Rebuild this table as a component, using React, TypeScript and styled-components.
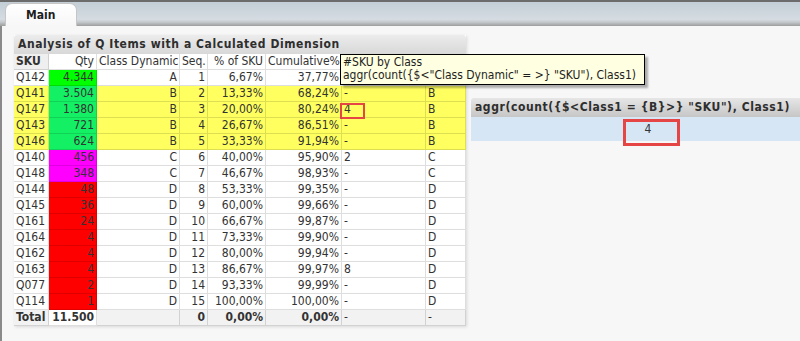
import * as React from "react";
import styled, { createGlobalStyle } from "styled-components";

const GlobalStyle = createGlobalStyle`
  html, body {
    margin: 0;
    padding: 0;
    background: #f7f7f7;
    overflow: hidden;
  }
  body {
    font-family: "DejaVu Sans Condensed", "DejaVu Sans", "Liberation Sans", sans-serif;
    font-stretch: condensed;
    font-size: 12px;
    color: #333333;
  }
`;

const Screen = styled.div`
  width: 800px;
  height: 341px;
  display: flex;
  flex-direction: column;
  overflow: hidden;
  background: #f7f7f7;
`;

const TabStrip = styled.div`
  height: 26px;
  box-sizing: border-box;
  border-top: 2px solid #6c6c6c;
  background: linear-gradient(#c3ced6 0%, #d5dce2 72%, #c4c9cd 84%, #9c9c9c 100%);
  display: flex;
  align-items: flex-end;
  padding-left: 5px;
`;

const Tab = styled.div`
  width: 72px;
  height: 23px;
  box-sizing: border-box;
  padding-left: 20px;
  line-height: 22px;
  font-weight: bold;
  color: #1e1e1e;
  background: linear-gradient(#ffffff, #f7f7f7);
  border: 1px solid #c6c6c6;
  border-bottom: none;
  border-radius: 7px 7px 0 0;
`;

const Sheet = styled.div`
  flex: 1;
  position: relative;
  display: flex;
  align-items: flex-start;
  gap: 5px;
  padding: 9px 0 0 12px;
  border-left: 2px solid #8a8a8a;
`;

const TableBox = styled.div`
  width: 452px;
  flex: none;
  display: flex;
  flex-direction: column;
  background: #ffffff;
  box-shadow: 1px 1px 3px rgba(0, 0, 0, 0.12);
`;

const Caption = styled.div<{ $dark?: boolean }>`
  height: 19px;
  line-height: 19px;
  padding-left: 4px;
  font-weight: bold;
  letter-spacing: 0.58px;
  white-space: pre;
  color: #2e2e2e;
  border-radius: 3px 3px 0 0;
  background: ${(p) =>
    p.$dark
      ? "linear-gradient(#e6e6e6, #c6c6c6)"
      : "linear-gradient(#ececec, #d8d8d8)"};
`;

const Row = styled.div<{ $bg: string }>`
  display: grid;
  grid-template-columns: 35px 48px 83px 28px 58px 76px 84px 40px;
  background: ${(p) => p.$bg};
`;

const Cell = styled.div<{ $align?: "left" | "right"; $fill?: string; $bold?: boolean }>`
  position: relative;
  height: 16px;
  box-sizing: border-box;
  padding: 0 2px;
  line-height: 15px;
  white-space: nowrap;
  text-align: ${(p) => p.$align ?? "right"};
  font-weight: ${(p) => (p.$bold ? "bold" : "normal")};
  background: ${(p) => p.$fill ?? "transparent"};
  border-right: 1px solid rgba(0, 0, 0, 0.13);
  border-bottom: 1px solid rgba(0, 0, 0, 0.13);
`;

const Marker = styled.span<{ $thick: number }>`
  position: absolute;
  box-sizing: border-box;
  border: ${(p) => p.$thick}px solid #e54545;
  pointer-events: none;
`;

const Tooltip = styled.div`
  position: absolute;
  left: 338px;
  top: 28px;
  width: 305px;
  box-sizing: border-box;
  padding: 1px 2px 2px 2px;
  line-height: 13px;
  white-space: pre;
  color: #1e1e1e;
  background: #ffffe1;
  border: 1px solid #000000;
  box-shadow: 3px 3px 2px rgba(0, 0, 0, 0.3);
  z-index: 2;
`;

const ExprBox = styled.div`
  margin-top: 63px;
  width: 354px;
  flex: none;
  display: flex;
  flex-direction: column;
`;

const ExprValue = styled.div`
  position: relative;
  height: 24px;
  line-height: 24px;
  text-align: center;
  color: #333333;
  background: #d6e6f5;
`;

type Band = "a" | "b" | "c" | "d";

const qtyFill: Record<Band, string> = {
  a: "#00ff00",
  b: "#14f064",
  c: "#ff00ff",
  d: "#ff0000",
};

const rowFill: Record<Band, string> = {
  a: "#ffffff",
  b: "#ffff5f",
  c: "#ffffff",
  d: "#ffffff",
};

// count/class1 of the first row sit under the hover tip, so they stay blank
const rows: {
  sku: string;
  qty: string;
  cls: string;
  seq: number;
  pct: string;
  cum: string;
  count: string;
  class1: string;
  band: Band;
  marked?: boolean;
}[] = [
  { sku: "Q142", qty: "4.344", cls: "A", seq: 1, pct: "6,67%", cum: "37,77%", count: "", class1: "", band: "a" },
  { sku: "Q141", qty: "3.504", cls: "B", seq: 2, pct: "13,33%", cum: "68,24%", count: "-", class1: "B", band: "b" },
  { sku: "Q147", qty: "1.380", cls: "B", seq: 3, pct: "20,00%", cum: "80,24%", count: "4", class1: "B", band: "b", marked: true },
  { sku: "Q143", qty: "721", cls: "B", seq: 4, pct: "26,67%", cum: "86,51%", count: "-", class1: "B", band: "b" },
  { sku: "Q146", qty: "624", cls: "B", seq: 5, pct: "33,33%", cum: "91,94%", count: "-", class1: "B", band: "b" },
  { sku: "Q140", qty: "456", cls: "C", seq: 6, pct: "40,00%", cum: "95,90%", count: "2", class1: "C", band: "c" },
  { sku: "Q148", qty: "348", cls: "C", seq: 7, pct: "46,67%", cum: "98,93%", count: "-", class1: "C", band: "c" },
  { sku: "Q144", qty: "48", cls: "D", seq: 8, pct: "53,33%", cum: "99,35%", count: "-", class1: "D", band: "d" },
  { sku: "Q145", qty: "36", cls: "D", seq: 9, pct: "60,00%", cum: "99,66%", count: "-", class1: "D", band: "d" },
  { sku: "Q161", qty: "24", cls: "D", seq: 10, pct: "66,67%", cum: "99,87%", count: "-", class1: "D", band: "d" },
  { sku: "Q164", qty: "4", cls: "D", seq: 11, pct: "73,33%", cum: "99,90%", count: "-", class1: "D", band: "d" },
  { sku: "Q162", qty: "4", cls: "D", seq: 12, pct: "80,00%", cum: "99,94%", count: "-", class1: "D", band: "d" },
  { sku: "Q163", qty: "4", cls: "D", seq: 13, pct: "86,67%", cum: "99,97%", count: "8", class1: "D", band: "d" },
  { sku: "Q077", qty: "2", cls: "D", seq: 14, pct: "93,33%", cum: "99,99%", count: "-", class1: "D", band: "d" },
  { sku: "Q114", qty: "1", cls: "D", seq: 15, pct: "100,00%", cum: "100,00%", count: "-", class1: "D", band: "d" },
];

export default function App() {
  return (
    <Screen>
      <GlobalStyle />
      <TabStrip>
        <Tab>Main</Tab>
      </TabStrip>
      <Sheet>
        <TableBox>
          <Caption>Analysis of Q Items with a Calculated Dimension</Caption>
          <Row $bg="#ffffff">
            <Cell $align="left" $bold $fill="#efefef">SKU</Cell>
            <Cell>Qty</Cell>
            <Cell>Class Dynamic</Cell>
            <Cell>Seq.</Cell>
            <Cell>% of SKU</Cell>
            <Cell>Cumulative%</Cell>
            <Cell $align="left" />
            <Cell $align="left" />
          </Row>
          {rows.map((r) => (
            <Row key={r.sku} $bg={rowFill[r.band]}>
              <Cell $align="left">{r.sku}</Cell>
              <Cell $fill={qtyFill[r.band]}>{r.qty}</Cell>
              <Cell>{r.cls}</Cell>
              <Cell>{r.seq}</Cell>
              <Cell>{r.pct}</Cell>
              <Cell>{r.cum}</Cell>
              <Cell $align="left">
                {r.count}
                {r.marked && (
                  <Marker $thick={2} style={{ left: -2, top: 1, width: 25, height: 16 }} />
                )}
              </Cell>
              <Cell $align="left">{r.class1}</Cell>
            </Row>
          ))}
          <Row $bg="#f2f2f2">
            <Cell $align="left" $bold>Total</Cell>
            <Cell $bold $fill="#ffffff">11.500</Cell>
            <Cell />
            <Cell $bold>0</Cell>
            <Cell $bold>0,00%</Cell>
            <Cell $bold>0,00%</Cell>
            <Cell $align="left">-</Cell>
            <Cell $align="left">-</Cell>
          </Row>
        </TableBox>

        <ExprBox>
          <Caption $dark>{'aggr(count({$<Class1 = {B}>} "SKU"), Class1)'}</Caption>
          <ExprValue>
            4
            <Marker $thick={3} style={{ left: 152, top: 2, width: 57, height: 27 }} />
          </ExprValue>
        </ExprBox>

        <Tooltip>
          {"#SKU by Class\n"}
          {'aggr(count({$<"Class Dynamic" = >} "SKU"), Class1)'}
        </Tooltip>
      </Sheet>
    </Screen>
  );
}
